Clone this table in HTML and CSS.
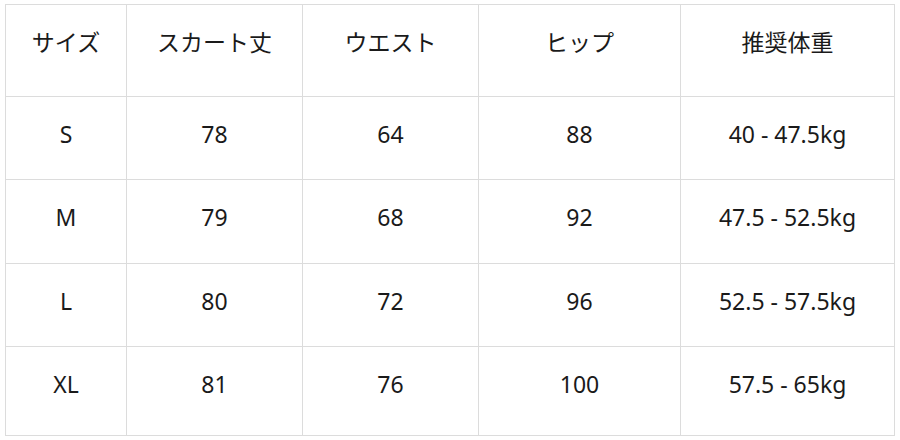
FILE: index.html
```html
<!DOCTYPE html>
<html lang="ja">
<head>
<meta charset="utf-8">
<link rel="stylesheet" href="styles.css">
</head>
<body>
<table class="size-table">
  <colgroup>
    <col class="c1"><col class="c2"><col class="c3"><col class="c4"><col class="c5">
  </colgroup>
  <tr class="r-head">
    <td>サイズ</td><td>スカート丈</td><td>ウエスト</td><td>ヒップ</td><td>推奨体重</td>
  </tr>
  <tr class="r-s">
    <td>S</td><td>78</td><td>64</td><td>88</td><td>40 - 47.5kg</td>
  </tr>
  <tr class="r-m">
    <td>M</td><td>79</td><td>68</td><td>92</td><td>47.5 - 52.5kg</td>
  </tr>
  <tr class="r-l">
    <td>L</td><td>80</td><td>72</td><td>96</td><td>52.5 - 57.5kg</td>
  </tr>
  <tr class="r-xl">
    <td>XL</td><td>81</td><td>76</td><td>100</td><td>57.5 - 65kg</td>
  </tr>
</table>
</body>
</html>
```
FILE: styles.css
```css
html, body {
  margin: 0;
  padding: 0;
  background: #ffffff;
}
body {
  padding: 4px 0 0 5px;
  font-family: "Noto Sans", "Noto Sans CJK JP", sans-serif;
  color: #1a1a1a;
}
.size-table {
  border-collapse: collapse;
  table-layout: fixed;
  width: 889px;
}
.size-table td {
  border: 1px solid #dcdcdc;
  text-align: center;
  vertical-align: top;
  font-size: 23px;
  line-height: 30px;
  padding: 22px 0 0 0;
  box-sizing: border-box;
}
.c1 { width: 121px; }
.c2 { width: 176px; }
.c3 { width: 176px; }
.c4 { width: 202px; }
.c5 { width: 214px; }
.r-head { height: 92px; }
.r-s { height: 83px; }
.r-m { height: 84px; }
.r-l { height: 83px; }
.r-xl { height: 89px; }
.r-head td {
  font-family: "Noto Sans CJK JP", sans-serif;
  padding-top: 21px;
}
```
